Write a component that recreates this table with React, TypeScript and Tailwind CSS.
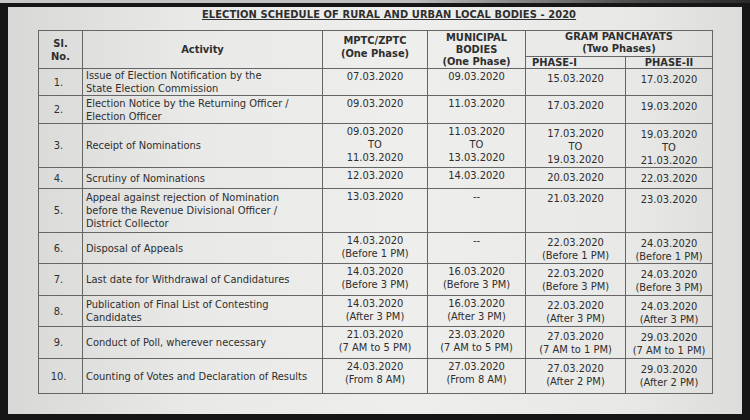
import React from "react";

type Row = {
    no: string;
    activity: string[];
    mptc: string[];
    municipal: string[];
    phase1: string[];
    phase2: string[];
    h: string;
};

const rows: Row[] = [
    { no: "1.", activity: ["Issue of Election Notification by the", "State Election Commission"], mptc: ["07.03.2020"], municipal: ["09.03.2020"], phase1: ["15.03.2020"], phase2: ["17.03.2020"], h: "h-[26px]" },
    { no: "2.", activity: ["Election Notice by the Returning Officer /", "Election Officer"], mptc: ["09.03.2020"], municipal: ["11.03.2020"], phase1: ["17.03.2020"], phase2: ["19.03.2020"], h: "h-[28px]" },
    { no: "3.", activity: ["Receipt of Nominations"], mptc: ["09.03.2020", "TO", "11.03.2020"], municipal: ["11.03.2020", "TO", "13.03.2020"], phase1: ["17.03.2020", "TO", "19.03.2020"], phase2: ["19.03.2020", "TO", "21.03.2020"], h: "h-[43px]" },
    { no: "4.", activity: ["Scrutiny of Nominations"], mptc: ["12.03.2020"], municipal: ["14.03.2020"], phase1: ["20.03.2020"], phase2: ["22.03.2020"], h: "h-[21px]" },
    { no: "5.", activity: ["Appeal against rejection of Nomination", "before the Revenue Divisional Officer /", "District Collector"], mptc: ["13.03.2020"], municipal: ["--"], phase1: ["21.03.2020"], phase2: ["23.03.2020"], h: "h-[44px]" },
    { no: "6.", activity: ["Disposal of Appeals"], mptc: ["14.03.2020", "(Before 1 PM)"], municipal: ["--"], phase1: ["22.03.2020", "(Before 1 PM)"], phase2: ["24.03.2020", "(Before 1 PM)"], h: "h-[30px]" },
    { no: "7.", activity: ["Last date for Withdrawal of Candidatures"], mptc: ["14.03.2020", "(Before 3 PM)"], municipal: ["16.03.2020", "(Before 3 PM)"], phase1: ["22.03.2020", "(Before 3 PM)"], phase2: ["24.03.2020", "(Before 3 PM)"], h: "h-[32px]" },
    { no: "8.", activity: ["Publication of Final List of Contesting", "Candidates"], mptc: ["14.03.2020", "(After 3 PM)"], municipal: ["16.03.2020", "(After 3 PM)"], phase1: ["22.03.2020", "(After 3 PM)"], phase2: ["24.03.2020", "(After 3 PM)"], h: "h-[31px]" },
    { no: "9.", activity: ["Conduct of Poll, wherever necessary"], mptc: ["21.03.2020", "(7 AM to 5 PM)"], municipal: ["23.03.2020", "(7 AM to 5 PM)"], phase1: ["27.03.2020", "(7 AM to 1 PM)"], phase2: ["29.03.2020", "(7 AM to 1 PM)"], h: "h-[32px]" },
    { no: "10.", activity: ["Counting of Votes and Declaration of Results"], mptc: ["24.03.2020", "(From 8 AM)"], municipal: ["27.03.2020", "(From 8 AM)"], phase1: ["27.03.2020", "(After 2 PM)"], phase2: ["29.03.2020", "(After 2 PM)"], h: "h-[35px]" },
];

const Lines = ({ items }: { items: string[] }) => (
    <>
        {items.map((t, i) => (
            <div key={i}>{t}</div>
        ))}
    </>
);

const App = () => {
    return (
        <div className="w-[750px] h-[420px] bg-[#161616] flex flex-col overflow-hidden">
            <div className="h-[3px] bg-[linear-gradient(90deg,#c9c9c9,#bdbdbd_55%,#4a4a4a_85%,#2a2a2a)]" />
            <div className="flex-1 mt-[4px] ml-[8px] mr-[8px] mb-[6px] bg-[linear-gradient(90deg,#d8d8d6,#e9e9e7_25%,#eeeeed_55%,#e8e8e7_85%,#dcdcdb)] overflow-hidden text-[#2e2e2e] font-['DejaVu_Sans_Condensed','DejaVu_Sans',sans-serif]">
                {/* title */}
                <div className="h-[15px] flex justify-center">
                    <span className="mt-[1px] pl-[28px] text-[11px] leading-[13px] font-bold underline underline-offset-1 tracking-[0.1px]">
                        ELECTION SCHEDULE OF RURAL AND URBAN LOCAL BODIES - 2020
                    </span>
                </div>

                {/* schedule table */}
                <table className="ml-[30px] mt-[8px] w-[674px] table-fixed border-collapse text-[11px] leading-[13px]">
                    <colgroup>
                        <col className="w-[44px]" />
                        <col className="w-[240px]" />
                        <col className="w-[105px]" />
                        <col className="w-[98px]" />
                        <col className="w-[100px]" />
                        <col className="w-[87px]" />
                    </colgroup>
                    <thead className="font-bold">
                        <tr className="h-[26px]">
                            <th rowSpan={2} className="border border-[#666] font-bold align-middle">
                                <div>Sl.</div>
                                <div>No.</div>
                            </th>
                            <th rowSpan={2} className="border border-[#666] font-bold align-middle">Activity</th>
                            <th rowSpan={2} className="border border-[#666] font-bold align-top pt-[3px]">
                                <div>MPTC/ZPTC</div>
                                <div>(One Phase)</div>
                            </th>
                            <th rowSpan={2} className="border border-[#666] font-bold align-top pt-[1px] leading-[12px]">
                                <div>MUNICIPAL</div>
                                <div>BODIES</div>
                                <div>(One Phase)</div>
                            </th>
                            <th colSpan={2} className="border border-[#666] font-bold align-bottom pb-[1px] leading-[12px]">
                                <div>GRAM PANCHAYATS</div>
                                <div>(Two Phases)</div>
                            </th>
                        </tr>
                        <tr className="h-[12px]">
                            <th className="border border-[#666] font-bold leading-[11px] pl-[6px] text-left">PHASE-I</th>
                            <th className="border border-[#666] font-bold leading-[11px]">PHASE-II</th>
                        </tr>
                    </thead>
                    <tbody>
                        {rows.map((r) => (
                            <tr key={r.no} className={r.h}>
                                <td className="border border-[#666] text-center align-middle pr-[4px]">{r.no}</td>
                                <td className="border border-[#666] align-middle pl-[3px]">
                                    <Lines items={r.activity} />
                                </td>
                                <td className="border border-[#666] text-center align-top pt-[1px]">
                                    <Lines items={r.mptc} />
                                </td>
                                <td className="border border-[#666] text-center align-top pt-[1px]">
                                    <Lines items={r.municipal} />
                                </td>
                                <td className="border border-[#666] text-center align-top pt-[3px]">
                                    <Lines items={r.phase1} />
                                </td>
                                <td className="border border-[#666] text-center align-top pt-[4px]">
                                    <Lines items={r.phase2} />
                                </td>
                            </tr>
                        ))}
                    </tbody>
                </table>
            </div>
        </div>
    );
};

export default App;
